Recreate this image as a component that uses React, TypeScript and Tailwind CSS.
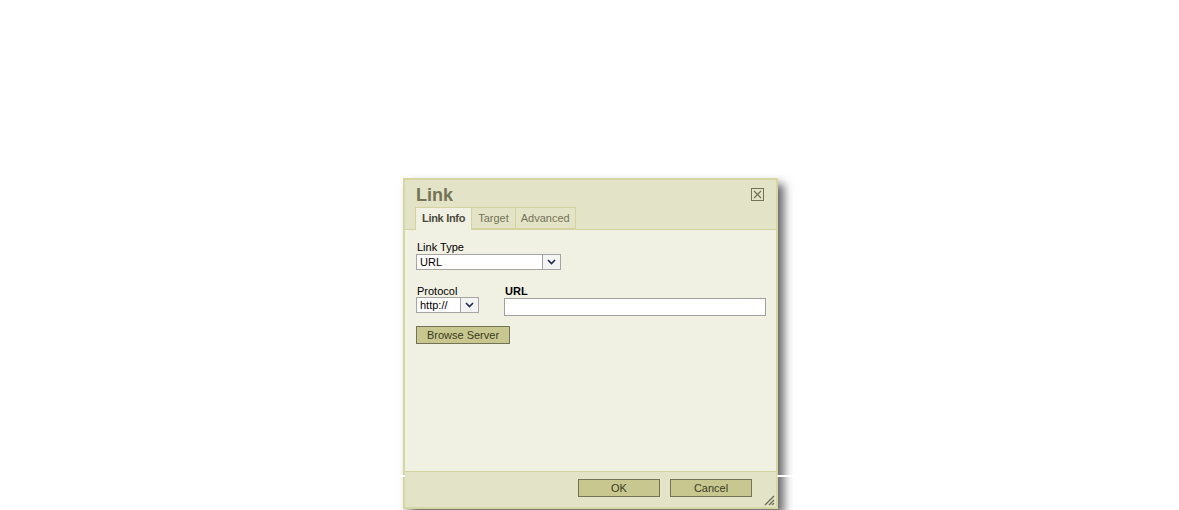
import React from "react";

const font = { fontFamily: '"Liberation Sans", Arial, sans-serif' };

function SelectBox({ value, width }: { value: string; width: string }) {
  return (
    <div className={`flex h-[16px] ${width} items-stretch border border-[#a5a5a5] bg-white`}>
      <span className="flex-1 pl-[3px] text-[11px] leading-[14px] text-black">{value}</span>
      <span className="flex w-[18px] items-center justify-center border-l border-[#a5a5a5] bg-[#f4f4f4]">
        <svg width="9" height="6" viewBox="0 0 9 6">
          <path d="M1 1 L4.5 4.5 L8 1" fill="none" stroke="#1f2a55" strokeWidth="1.6" />
        </svg>
      </span>
    </div>
  );
}

function Btn({ children, width }: { children: React.ReactNode; width: string }) {
  return (
    <button
      className={`block h-[18px] ${width} border border-[#737357] bg-[#c7c78f] text-[11px] leading-[16px] text-[#3b3b1f]`}
    >
      {children}
    </button>
  );
}

export default function App() {
  return (
    <div className="relative h-[510px] w-[1179px] overflow-hidden bg-white" style={font}>
      <div className="pl-[403px] pt-[178px]">
        <div className="flex h-[331px] w-[375px] flex-col border-2 border-[#d6d6a2] bg-[#e3e3c7] shadow-[6px_6px_9px_rgba(0,0,0,0.6)]">
          {/* title bar */}
          <div className="flex h-[27px] items-start justify-between pl-[11px] pr-[12px]">
            <span className="mt-[5px] text-[18px] font-bold leading-[20px] text-[#737357]">Link</span>
            <span className="mt-[8px] flex h-[13px] w-[13px] items-center justify-center border border-[#737357]">
              <svg width="9" height="9" viewBox="0 0 9 9">
                <path d="M1 1 L8 8 M8 1 L1 8" stroke="#737357" strokeWidth="1.3" />
              </svg>
            </span>
          </div>
          {/* tabs */}
          <div className="flex h-[22px] items-end pl-[10px]">
            <div className="relative z-10 -mb-px flex h-[23px] items-center border border-b-0 border-[#d3d3a0] bg-[#f1f1e3] px-[6px] pb-[1px] text-[11px] font-bold tracking-[-0.3px] text-[#4b4b3b]">
              Link Info
            </div>
            <div className="flex h-[22px] items-center border border-l-0 border-[#d3d3a0] bg-[#e3e3c7] px-[6px] text-[11px] text-[#737357]">
              Target
            </div>
            <div className="flex h-[22px] items-center border border-l-0 border-[#d3d3a0] bg-[#e3e3c7] px-[5px] text-[11px] text-[#737357]">
              Advanced
            </div>
          </div>
          {/* body */}
          <div className="flex-1 border-t border-[#d3d3a0] bg-[#f1f1e3] pl-[11px] pr-[10px] pt-[11px] text-black">
            <div className="pl-[1px] text-[11px] leading-[13px]">Link Type</div>
            <SelectBox value="URL" width="w-[145px]" />
            <div className="mt-[15px] flex gap-[25px]">
              <div>
                <div className="pl-[1px] text-[11px] leading-[12px]">Protocol</div>
                <SelectBox value="http://" width="w-[63px]" />
              </div>
              <div className="flex-1">
                <div className="pl-[1px] text-[11px] font-bold leading-[13px]">URL</div>
                <div className="h-[18px] w-[262px] border border-[#a0a0a0] bg-white" />
              </div>
            </div>
            <div className="mt-[10px]">
              <Btn width="w-[94px]">Browse Server</Btn>
            </div>
          </div>
          {/* footer */}
          <div className="relative flex h-[36px] justify-end gap-[10px] border-t border-[#d3d3a0] pr-[24px] pt-[7px]">
            <Btn width="w-[82px]">OK</Btn>
            <Btn width="w-[82px]">Cancel</Btn>
            <svg className="absolute bottom-[1px] right-[1px]" width="13" height="13" viewBox="0 0 13 13">
              <path d="M12 3 L3 12 M12 7 L7 12 M12 10 L10 12" stroke="#6b6b55" strokeWidth="1.3" />
            </svg>
          </div>
        </div>
      </div>
      <div className="absolute left-[398px] top-[475px] h-[2px] w-[7px] bg-white" />
      <div className="absolute left-[777px] top-[475px] h-[2px] w-[25px] bg-white" />
    </div>
  );
}
